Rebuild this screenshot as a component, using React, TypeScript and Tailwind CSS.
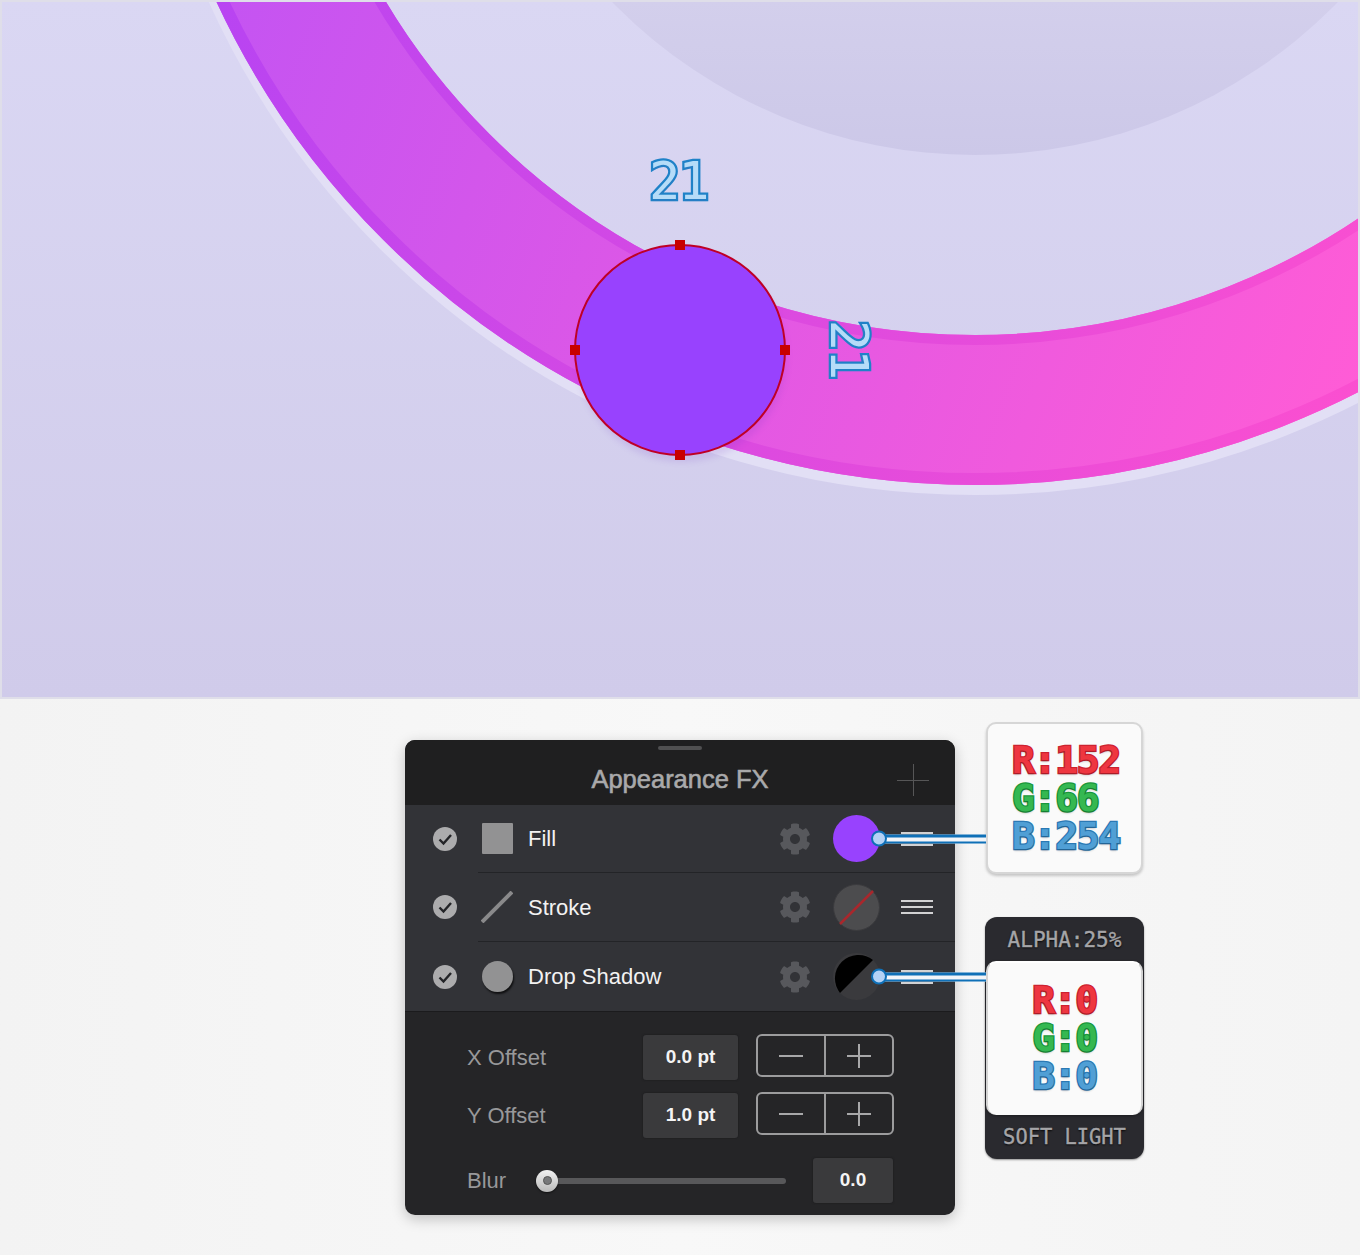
import React from "react";
import { FaCog } from "react-icons/fa";

const sans = "[font-family:'Liberation_Sans',Arial,sans-serif]";
const mono = "[font-family:'DejaVu_Sans_Mono',monospace]";

function Art() {
  return (
    <svg width="1360" height="699" viewBox="0 0 1360 699" className="block">
      <defs>
        <linearGradient id="bg" x1="0" y1="0" x2="0" y2="698" gradientUnits="userSpaceOnUse">
          <stop offset="0" stopColor="#dad7f3" />
          <stop offset="1" stopColor="#d0cbea" />
        </linearGradient>
        <linearGradient id="inner" x1="0" y1="0" x2="0" y2="155" gradientUnits="userSpaceOnUse">
          <stop offset="0" stopColor="#d3cfec" />
          <stop offset="1" stopColor="#ccc8e8" />
        </linearGradient>
        <linearGradient id="ring" x1="216" y1="0" x2="1358" y2="400" gradientUnits="userSpaceOnUse">
          <stop offset="0" stopColor="#c454f2" />
          <stop offset="1" stopColor="#ff5cd6" />
        </linearGradient>
        <linearGradient id="band" x1="216" y1="0" x2="1358" y2="400" gradientUnits="userSpaceOnUse">
          <stop offset="0" stopColor="#b844f2" />
          <stop offset="1" stopColor="#fb4fd0" />
        </linearGradient>
        <filter id="soft" x="-20%" y="-20%" width="140%" height="140%">
          <feGaussianBlur stdDeviation="3" />
        </filter>
      </defs>
      <rect width="1360" height="699" fill="url(#bg)" />
      <circle cx="975" cy="-352" r="507" fill="url(#inner)" />
      <circle cx="975" cy="-347" r="837" fill="none" stroke="#e2dff5" strokeWidth="10" />
      <circle cx="975" cy="-352" r="762" fill="none" stroke="url(#ring)" strokeWidth="150" />
      <circle cx="975" cy="-352" r="831" fill="none" stroke="url(#band)" strokeWidth="12" />
      <circle cx="975" cy="-352" r="692" fill="none" stroke="url(#band)" strokeWidth="10" />
      <circle cx="682" cy="357" r="105" fill="#6a2ec0" opacity="0.13" filter="url(#soft)" />
      <circle cx="680" cy="350" r="105" fill="#9842fe" stroke="#bf0026" strokeWidth="2" />
      <rect x="675" y="240" width="10" height="10" fill="#c80000" />
      <rect x="675" y="450" width="10" height="10" fill="#c80000" />
      <rect x="570" y="345" width="10" height="10" fill="#c80000" />
      <rect x="780" y="345" width="10" height="10" fill="#c80000" />
    </svg>
  );
}

function Check() {
  return (
    <svg width="24" height="24" viewBox="0 0 24 24" className="shrink-0">
      <circle cx="12" cy="12" r="12" fill="#acacad" />
      <path d="M6.5 12.5l4 4 7.5-8.5" fill="none" stroke="#232427" strokeWidth="2.4" />
    </svg>
  );
}

function Lines() {
  return (
    <div className="flex flex-col gap-1 w-8 shrink-0">
      <div className="h-0.5 bg-[#d2d2d3]" />
      <div className="h-0.5 bg-[#d2d2d3]" />
      <div className="h-0.5 bg-[#d2d2d3]" />
    </div>
  );
}

function Connector() {
  return (
    <div className="absolute left-[474px] w-[107px] top-1/2 -translate-y-1/2 h-[9px] flex items-center">
      <div className="w-full h-[9px] bg-[#f2f5f9] border-t-[3px] border-b-2 border-[#0f70b7]" />
      <div className="absolute -left-[8px] top-1/2 -translate-y-1/2 w-[16px] h-[16px] rounded-full bg-[#b4d2f5] border-2 border-[#0f70b7]" />
    </div>
  );
}

function Row({
  icon,
  label,
  swatch,
  connector,
  rowClass,
}: {
  icon: React.ReactNode;
  label: string;
  swatch: React.ReactNode;
  connector?: boolean;
  rowClass: string;
}) {
  return (
    <div className={`relative flex items-center pl-[28px] pr-[22px] ${rowClass}`}>
      <Check />
      <div className="w-8 h-8 ml-[24px] flex items-center justify-center shrink-0">{icon}</div>
      <div className={`ml-[15px] text-[22px] text-[#f2f2f2] flex-1 ${sans}`}>{label}</div>
      <FaCog className="text-[#57585c] w-8 h-8 mr-[22px]" />
      <div className="mr-[21px] shrink-0">{swatch}</div>
      <Lines />
      {connector && <Connector />}
    </div>
  );
}

function Stepper() {
  return (
    <div className="flex w-[138px] h-[43px] mb-1 border-2 border-[#9c9c9d] rounded-md">
      <div className="flex-1 flex items-center justify-center border-r-2 border-[#9c9c9d]">
        <div className="w-6 h-0.5 bg-[#a8a8a9]" />
      </div>
      <div className="flex-1 flex items-center justify-center relative">
        <div className="w-6 h-0.5 bg-[#a8a8a9]" />
        <div className="absolute w-0.5 h-6 bg-[#a8a8a9]" />
      </div>
    </div>
  );
}

function ValueBox({ children, className }: { children: string; className: string }) {
  return (
    <div
      className={`h-[45px] flex items-center justify-center rounded-[3px] bg-[#3a3a3c] shadow-[0_0_2px_#18181a] text-[19px] font-bold text-[#f4f4f4] ${sans} ${className}`}
    >
      {children}
    </div>
  );
}

function OffsetRow({ label, value }: { label: string; value: string }) {
  return (
    <div className="flex items-center h-[45px]">
      <div className={`w-[176px] text-[22px] text-[#98989a] ${sans}`}>{label}</div>
      <ValueBox className="w-[95px]">{value}</ValueBox>
      <div className="ml-[18px]">
        <Stepper />
      </div>
    </div>
  );
}

function Panel() {
  return (
    <div className="relative w-[550px] h-[475px] mt-[18px] rounded-[10px] bg-[#252527] shadow-[0_4px_14px_rgba(0,0,0,0.22)] flex flex-col shrink-0">
      <div className="relative h-[65px] rounded-t-[10px] bg-[#1f1f20] flex items-center justify-center">
        <div className="absolute top-[6px] left-1/2 -translate-x-1/2 w-[44px] h-1 rounded-full bg-[#505051]" />
        <div className={`mt-[13px] text-[25.5px] text-[#a9a9aa] [-webkit-text-stroke:0.6px_#a9a9aa] ${sans}`}>Appearance FX</div>
        <div className="absolute left-[492px] top-[24px] w-8 h-8 flex items-center justify-center">
          <div className="w-full h-px bg-[#565657]" />
          <div className="absolute h-full w-px bg-[#565657]" />
        </div>
      </div>
      <div className="bg-[#323337] flex flex-col shadow-[0_1px_0_#1b1b1d]">
        <Row
          rowClass="h-[67px]"
          icon={<div className="w-[31px] h-[31px] bg-[#929293] rounded-[1px]" />}
          label="Fill"
          swatch={<div className="w-[47px] h-[47px] rounded-full bg-[#9842fe]" />}
          connector
        />
        <div className="ml-[73px] h-px bg-[#232427]" />
        <Row
          rowClass="h-[68px]"
          icon={
            <svg width="32" height="32" viewBox="0 0 32 32">
              <path d="M1 31L31 1" stroke="#8a8a8b" strokeWidth="4" />
            </svg>
          }
          label="Stroke"
          swatch={
            <svg width="47" height="47" viewBox="0 0 47 47" className="block">
              <circle cx="23.5" cy="23.5" r="23" fill="#4c4c4e" stroke="#3b3b3e" />
              <path d="M7 40L40 7" stroke="#a9272c" strokeWidth="2.5" />
            </svg>
          }
        />
        <div className="ml-[73px] h-px bg-[#232427]" />
        <Row
          rowClass="h-[69px]"
          icon={<div className="w-[31px] h-[31px] bg-[#929293] rounded-full shadow-[1px_2px_2px_rgba(0,0,0,0.7)]" />}
          label="Drop Shadow"
          swatch={
            <svg width="47" height="47" viewBox="0 0 47 47" className="block">
              <circle cx="23.5" cy="23.5" r="23.5" fill="#3a3a3d" />
              <path d="M7 40A23.5 23.5 0 0 1 40 7Z" fill="#000" />
            </svg>
          }
          connector
        />
      </div>
      <div className="flex flex-col pl-[62px] pr-[61px] pt-[24px]">
        <OffsetRow label="X Offset" value="0.0 pt" />
        <div className="mt-[13px]">
          <OffsetRow label="Y Offset" value="1.0 pt" />
        </div>
        <div className="flex items-center h-[45px] mt-[20px]">
          <div className={`w-[80px] text-[22px] text-[#98989a] ${sans}`}>Blur</div>
          <div className="relative w-[239px] h-[6px] rounded-full bg-[#58585a]">
            <div className="absolute -left-[11px] top-1/2 -translate-y-1/2 w-[22px] h-[22px] rounded-full bg-linear-to-b from-[#f2f2f2] to-[#b9b9b9] shadow-[0_1px_2px_rgba(0,0,0,0.6)] flex items-center justify-center">
              <div className="w-[9px] h-[9px] rounded-full bg-[#77787a] border border-[#555]" />
            </div>
          </div>
          <ValueBox className="w-[80px] ml-auto mr-px">0.0</ValueBox>
        </div>
      </div>
    </div>
  );
}

const glyphShadow = "[text-shadow:0_2px_2px_rgba(0,0,0,0.18)] [paint-order:stroke_fill] tracking-[-1.3px]";
const red = `text-[#ee3640] [-webkit-text-stroke:2.5px_#cc2230] ${glyphShadow}`;
const green = `text-[#35b851] [-webkit-text-stroke:2.5px_#1a963c] ${glyphShadow}`;
const blue = `text-[#509fd5] [-webkit-text-stroke:2.5px_#2b79b4] ${glyphShadow}`;

function Card() {
  return (
    <div className={`w-[157px] h-[152px] rounded-[10px] bg-[#fafafa] border-2 border-[#d6d6d6] shadow-[0_2px_3px_rgba(0,0,0,0.2)] flex flex-col pl-6 pt-[17px] text-[38px] leading-[38px] font-bold ${mono}`}>
      <div className={red}>R:152</div>
      <div className={green}>G:66</div>
      <div className={blue}>B:254</div>
    </div>
  );
}

function DarkCard() {
  const label = `text-center text-[#a5a5a8] [-webkit-text-stroke:0.4px_#a5a5a8] [text-shadow:0_1px_2px_#000] ${mono}`;
  return (
    <div className="w-[159px] h-[242px] rounded-xl bg-[#2a2a2f] shadow-[0_1px_2px_rgba(0,0,0,0.4)] flex flex-col items-center">
      <div className={`h-[44px] pt-[3px] flex items-center text-[21px] ${label}`}>ALPHA:25%</div>
      <div className={`w-[157px] h-[154px] rounded-[10px] bg-[#fafafa] border-t-2 border-x-2 border-x-[#d4d4d4] border-t-[#ffffff] shadow-[0_1px_3px_rgba(0,0,0,0.35)] flex flex-col items-center justify-center pb-[2px] text-[38px] leading-[38px] font-bold ${mono}`}>
        <div className={red}>R:0</div>
        <div className={green}>G:0</div>
        <div className={blue}>B:0</div>
      </div>
      <div className={`flex-1 flex items-center text-[20.4px] ${label}`}>SOFT LIGHT</div>
    </div>
  );
}

export default function App() {
  const dim = `absolute text-[#b5dcf8] text-[52px] leading-none tracking-[-2px] [-webkit-text-stroke:4.5px_#1f82c8] [paint-order:stroke_fill] [text-shadow:0_2px_1px_rgba(60,120,190,0.3)] ${mono}`;
  return (
    <div className="w-[1360px] h-[1255px] bg-linear-to-r from-[#f3f3f3] via-[#f8f8f8] to-[#f4f4f4] overflow-hidden">
      <div className="relative h-[699px]">
        <Art />
        <div className="absolute inset-0 border-2 border-[#dfdee9]" />
        <div className={`${dim} left-[649px] top-[155px]`}>21</div>
        <div className={`${dim} left-[820px] top-[323px] rotate-90`}>21</div>
      </div>
      <div className="flex items-start gap-[31px] pl-[405px] pt-[23px]">
        <Panel />
        <div className="flex flex-col gap-[43px] items-start">
          <Card />
          <div className="-ml-px">
            <DarkCard />
          </div>
        </div>
      </div>
    </div>
  );
}
